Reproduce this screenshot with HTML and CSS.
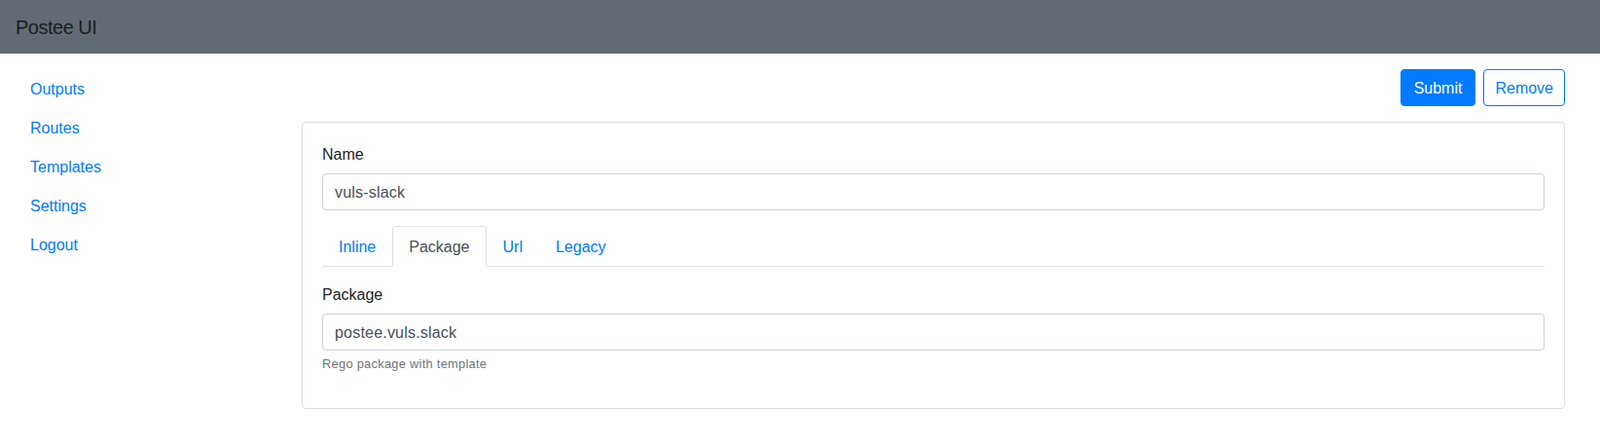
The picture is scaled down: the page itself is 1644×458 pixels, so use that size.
FILE: index.html
```html
<!DOCTYPE html>
<html lang="en">
<head>
<meta charset="utf-8">
<title>Postee UI</title>
<link rel="stylesheet" href="styles.css">
</head>
<body>
<header class="navbar">
  <span class="brand">Postee UI</span>
</header>
<div class="layout">
  <nav class="sidebar">
    <a class="side-link" href="#">Outputs</a>
    <a class="side-link" href="#">Routes</a>
    <a class="side-link" href="#">Templates</a>
    <a class="side-link" href="#">Settings</a>
    <a class="side-link" href="#">Logout</a>
  </nav>
  <main class="main">
    <div class="toolbar">
      <button class="btn btn-primary" type="button">Submit</button>
      <button class="btn btn-outline" type="button">Remove</button>
    </div>
    <div class="card">
      <div class="form-group">
        <label class="label" for="name">Name</label>
        <input class="input" id="name" type="text" value="vuls-slack">
      </div>
      <ul class="tabs">
        <li><a class="tab" href="#">Inline</a></li>
        <li><a class="tab active" href="#">Package</a></li>
        <li><a class="tab" href="#">Url</a></li>
        <li><a class="tab" href="#">Legacy</a></li>
      </ul>
      <div class="tab-content">
        <div class="form-group">
          <label class="label" for="pkg">Package</label>
          <input class="input" id="pkg" type="text" value="postee.vuls.slack">
          <small class="help">Rego package with template</small>
        </div>
      </div>
    </div>
  </main>
</div>
</body>
</html>
```
FILE: styles.css
```css
* { box-sizing: border-box; }

body {
  margin: 0;
  font-family: "Liberation Sans", Arial, sans-serif;
  font-size: 16px;
  line-height: 24px;
  color: #212529;
  background: #fff;
}

.navbar {
  height: 55px;
  background: #626b74;
  display: flex;
  align-items: center;
  padding: 1px 16px 0;
}

.brand {
  font-size: 20px;
  line-height: 30px;
  letter-spacing: -0.5px;
  color: #1b1e21;
}

.layout {
  display: flex;
  padding-top: 16px;
}

.sidebar {
  width: 310px;
  flex: none;
  padding-left: 15px;
  display: flex;
  flex-direction: column;
  align-items: flex-start;
}

.side-link {
  display: block;
  padding: 9px 16px 7px;
  color: #007bff;
  text-decoration: none;
}

.main {
  flex: 1;
  padding-right: 36px;
}

.toolbar {
  display: flex;
  justify-content: flex-end;
  gap: 8px;
}

.btn {
  font-family: inherit;
  font-size: 16px;
  line-height: 24px;
  padding: 7px 12px 5px;
  border: 1px solid #007bff;
  border-radius: 4px;
  cursor: pointer;
}

.btn-primary {
  background: #007bff;
  color: #fff;
  padding-left: 13px;
  padding-right: 13px;
}

.btn-outline {
  background: #fff;
  color: #007bff;
  padding-left: 11px;
  padding-right: 11px;
}

.card {
  margin-top: 16px;
  border: 1px solid rgba(0, 0, 0, 0.125);
  border-radius: 4px;
  padding: 20px;
}

.form-group {
  margin-bottom: 16px;
}

.label {
  display: block;
  padding-top: 1px;
  height: 24px;
  margin-bottom: 8px;
}

.input {
  display: block;
  width: 100%;
  height: 38px;
  padding: 7px 12px 5px;
  font-family: inherit;
  font-size: 16px;
  line-height: 24px;
  letter-spacing: 0.2px;
  color: #495057;
  border: 1px solid #ced4da;
  border-radius: 4px;
  background: #fff;
}

.help {
  display: block;
  margin-top: 4px;
  font-size: 12.8px;
  line-height: 19.2px;
  letter-spacing: 0.3px;
  color: #6c757d;
}

.tabs {
  list-style: none;
  margin: 0;
  padding: 0;
  display: flex;
  border-bottom: 1px solid #dee2e6;
}

.tab {
  display: block;
  padding: 9px 16px 7px;
  margin-bottom: -1px;
  border: 1px solid transparent;
  border-radius: 4px 4px 0 0;
  color: #007bff;
  text-decoration: none;
}

.tab.active {
  color: #495057;
  background: #fff;
  border-color: #dee2e6 #dee2e6 #fff;
}

.tab-content {
  padding-top: 16px;
}
```
